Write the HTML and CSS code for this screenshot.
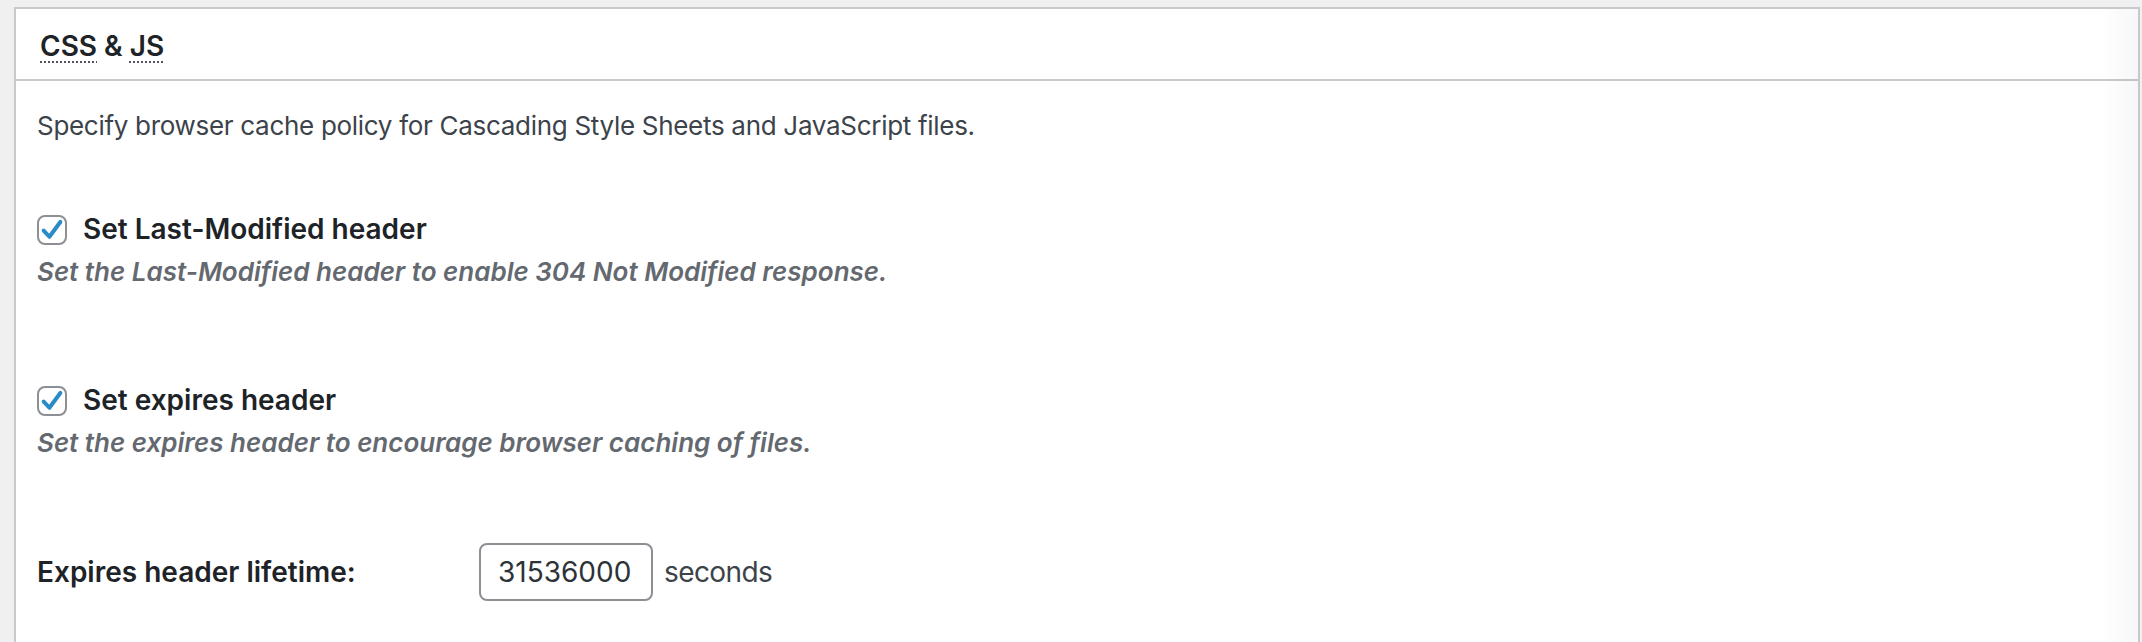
FILE: index.html
```html
<!DOCTYPE html>
<html lang="en">
<head>
<meta charset="utf-8">
<title>CSS &amp; JS</title>
<link rel="stylesheet" href="styles.css">
</head>
<body>
<div class="postbox">
  <div class="postbox-header">
    <h3 class="postbox-title"><abbr class="acr" title="Cascading Style Sheet">CSS</abbr> &amp; <abbr class="acr" title="JavaScript">JS</abbr></h3>
  </div>
  <div class="inside">
    <p class="intro">Specify browser cache policy for Cascading Style Sheets and JavaScript files.</p>
    <div class="opt opt-first">
      <label class="check-row">
        <span class="cbox"><svg viewBox="0 0 20 20" width="26" height="26"><path d="M3.6 10.4 L8 15.2 L16.4 3.8" fill="none" stroke="#2a8cc7" stroke-width="3.1" stroke-linecap="round" stroke-linejoin="round"/></svg></span>
        <span class="check-label">Set Last-Modified header</span>
      </label>
      <p class="desc">Set the Last-Modified header to enable 304 Not Modified response.</p>
    </div>
    <div class="opt">
      <label class="check-row">
        <span class="cbox"><svg viewBox="0 0 20 20" width="26" height="26"><path d="M3.6 10.4 L8 15.2 L16.4 3.8" fill="none" stroke="#2a8cc7" stroke-width="3.1" stroke-linecap="round" stroke-linejoin="round"/></svg></span>
        <span class="check-label">Set expires header</span>
      </label>
      <p class="desc">Set the expires header to encourage browser caching of files.</p>
    </div>
    <div class="field-row">
      <span class="field-label">Expires header lifetime:</span>
      <span class="field-input">31536000</span>
      <span class="field-unit">seconds</span>
    </div>
  </div>
</div>
</body>
</html>
```
FILE: styles.css
```css
html, body {
  margin: 0;
  padding: 0;
  height: 100%;
}
body {
  background: #f0f0f1;
  font-family: Inter, "Noto Sans", sans-serif;
  color: #3c434a;
  overflow: hidden;
}
.postbox {
  position: relative;
  box-sizing: border-box;
  margin: 7px 2px 0 14px;
  height: calc(100vh - 7px);
  background: #fff;
  border: 2px solid #c8c9cc;
  border-bottom: none;
}
.postbox::after {
  content: "";
  position: absolute;
  top: 0;
  right: 0;
  bottom: 0;
  width: 38px;
  background: linear-gradient(to right, rgba(0,0,0,0), rgba(0,0,0,0.03));
  pointer-events: none;
}
.postbox-header {
  box-sizing: border-box;
  height: 72px;
  border-bottom: 2px solid #c8c9cc;
  display: flex;
  align-items: center;
  padding: 5px 24px 0;
}
.postbox-title {
  margin: 0;
  font-size: 28px;
  line-height: 39px;
  font-weight: 600;
  color: #1d2327;
}
.acr {
  text-decoration: underline dotted #50575e;
  text-decoration-thickness: 2px;
  text-underline-offset: 5px;
}
.inside {
  padding: 0 21px;
}
.intro {
  margin: 27px 0 0;
  font-size: 26px;
  line-height: 36px;
  letter-spacing: -0.3px;
}
.opt {
  margin-top: 91px;
}
.opt-first {
  margin-top: 66px;
}
.check-row {
  display: flex;
  align-items: center;
  gap: 16px;
}
.cbox {
  box-sizing: border-box;
  width: 30px;
  height: 30px;
  border: 2px solid #8c8f94;
  border-radius: 8px;
  display: flex;
  align-items: center;
  justify-content: center;
  background: #fff;
}
.check-label {
  font-size: 28px;
  line-height: 39px;
  font-weight: 600;
  color: #1d2327;
}
.desc {
  margin: 5px 0 0;
  font-size: 26px;
  line-height: 36px;
  font-style: italic;
  font-weight: 600;
  color: #646970;
}
.field-row {
  margin-top: 82px;
  display: flex;
  align-items: center;
}
.field-label {
  width: 442px;
  font-size: 28px;
  line-height: 39px;
  font-weight: 600;
  color: #1d2327;
}
.field-input {
  box-sizing: border-box;
  width: 174px;
  height: 58px;
  border: 2px solid #8c8f94;
  border-radius: 8px;
  padding: 0 17px;
  display: flex;
  align-items: center;
  font-size: 28px;
  color: #2c3338;
}
.field-unit {
  margin-left: 11px;
  font-size: 28px;
  letter-spacing: -0.6px;
  color: #3c434a;
}
```
